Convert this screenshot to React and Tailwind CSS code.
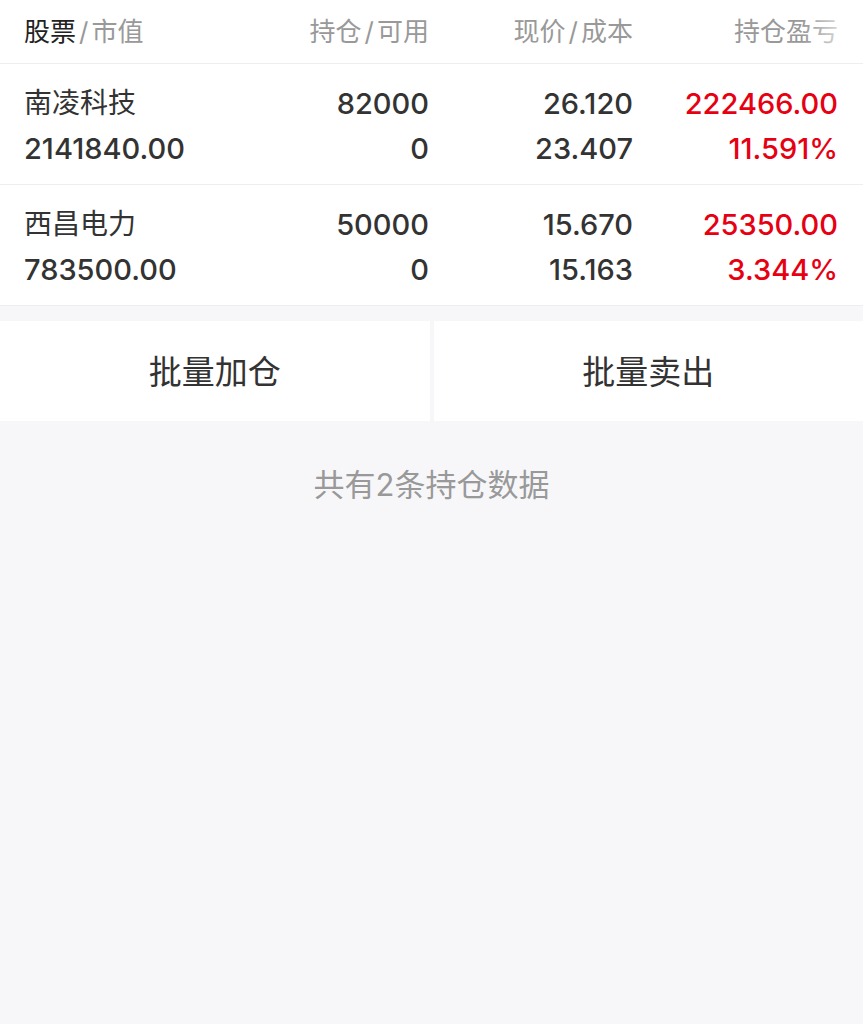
import React from 'react';

const FONT = { fontFamily: 'Inter, "Noto Sans CJK SC", sans-serif' };

const holdings = [
  { name: '南凌科技', value: '2141840.00', qty: '82000', avail: '0', price: '26.120', cost: '23.407', pl: '222466.00', pct: '11.591%' },
  { name: '西昌电力', value: '783500.00', qty: '50000', avail: '0', price: '15.670', cost: '15.163', pl: '25350.00', pct: '3.344%' },
];

const cols = 'grid grid-cols-[200px_205px_204px_205px] pl-[24px] pr-[25px]';

const Slash = () => <span className="mx-[3px]">/</span>;

export default function App() {
  return (
    <div className="min-h-[1024px] bg-[#f7f7fa]" style={FONT}>
      {/* Header */}
      <div className="relative bg-white border-b border-[#eeeeee]">
        <div className={`${cols} h-[63px] items-center text-[26px] text-[#999999]`}>
          <div>
            <span className="text-[#222222]">股票</span><Slash />市值
          </div>
          <div className="text-right">持仓<Slash />可用</div>
          <div className="text-right">现价<Slash />成本</div>
          <div className="text-right">持仓盈亏</div>
        </div>
        <div className="absolute right-0 top-0 h-full w-[60px] bg-gradient-to-r from-white/0 to-white" />
      </div>

      {/* Rows */}
      {holdings.map((h) => (
        <div key={h.name} className="bg-white border-b border-[#eeeeee]">
          <div className={`${cols} pt-[17px] pb-[13px] text-[29px] leading-[45px] text-[#333333]`}>
            <div className="flex flex-col">
              <span className="text-[28px] font-normal">{h.name}</span>
              <span className="font-medium">{h.value}</span>
            </div>
            <div className="flex flex-col items-end font-medium">
              <span>{h.qty}</span>
              <span>{h.avail}</span>
            </div>
            <div className="flex flex-col items-end font-medium">
              <span>{h.price}</span>
              <span>{h.cost}</span>
            </div>
            <div className="flex flex-col items-end font-medium text-[#e60012]">
              <span>{h.pl}</span>
              <span>{h.pct}</span>
            </div>
          </div>
        </div>
      ))}

      {/* Actions */}
      <div className="mt-[15px] flex gap-[4px]">
        <button className="flex-1 h-[100px] pt-[3px] bg-white text-[33px] text-[#333333]">批量加仓</button>
        <button className="flex-1 h-[100px] pt-[3px] bg-white text-[33px] text-[#333333]">批量卖出</button>
      </div>

      <div className="pt-[44px] text-center text-[31px] leading-[40px] text-[#999999]">
        共有2条持仓数据
      </div>
    </div>
  );
}
